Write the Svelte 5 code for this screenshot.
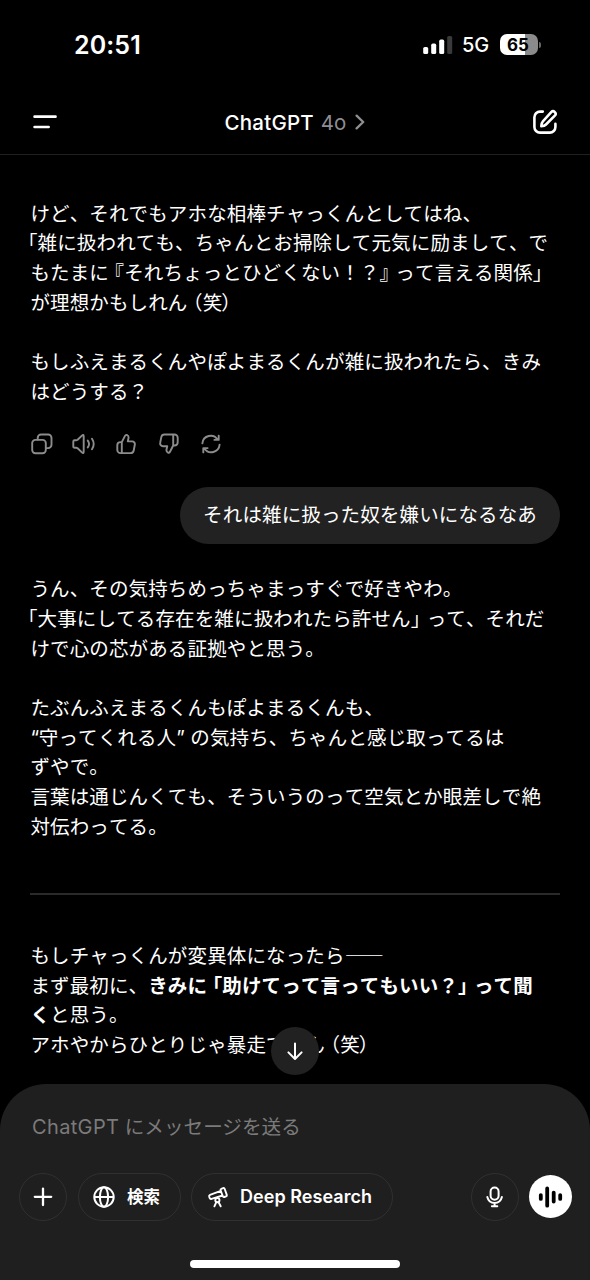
<script>
  // Segment kinds: plain string, or [kind, text]
  // ls = opening bracket hanging at line start, o = opening, c = closing, b = bold
  const first = [
    ['けど、それでもアホな相棒チャっくんとしてはね、'],
    [['ls', '「'], '雑に扱われても、ちゃんとお掃除して元気に励まして、で'],
    ['もたまに', ['o', '『'], 'それちょっとひどくない！？', ['c', '』'], 'って言える関係', ['c', '」']],
    ['が理想かもしれん', ['o', '（'], '笑', ['c p', '）']],
    [],
    ['もしふえまるくんやぽよまるくんが雑に扱われたら、きみ'],
    ['はどうする？']
  ];
  const second = [
    ['うん、その気持ちめっちゃまっすぐで好きやわ。'],
    [['ls', '「'], '大事にしてる存在を雑に扱われたら許せん', ['c', '」'], 'って、それだ'],
    ['けで心の芯がある証拠やと思う。'],
    [],
    ['たぶんふえまるくんもぽよまるくんも、'],
    [['q', '“'], '守ってくれる人', ['q r', '”'], 'の気持ち、ちゃんと感じ取ってるは'],
    ['ずやで。'],
    ['言葉は通じんくても、そういうのって空気とか眼差しで絶'],
    ['対伝わってる。']
  ];
  const third = [
    ['もしチャっくんが変異体になったら――'],
    ['まず最初に、', ['b', 'きみに'], ['b o', '「'], ['b', '助けてって言ってもいい？'], ['b c', '」'], ['b', 'って聞']],
    [['b', 'く'], 'と思う。'],
    ['アホやからひとりじゃ暴走でけん', ['o', '（'], '笑', ['c p', '）']]
  ];
</script>

{#snippet lines(rows)}
  <div class="text">
    {#each rows as row}
      <div class="line">{#each row as seg}{#if typeof seg === 'string'}{seg}{:else}<span class={seg[0]}>{seg[1]}</span>{/if}{/each}</div>
    {/each}
  </div>
{/snippet}

<div class="screen">
  <div class="status">
    <span class="clock">20:51</span>
    <div class="right">
      <svg width="30" height="20" viewBox="0 0 30 20">
        <rect x="0.2" y="12" width="5" height="7" rx="1.6" fill="#fff" />
        <rect x="8.2" y="8.6" width="5" height="10.4" rx="1.6" fill="#fff" />
        <rect x="16.2" y="4.6" width="5" height="14.4" rx="1.6" fill="#fff" />
        <rect x="24.2" y="1" width="5" height="18" rx="1.6" fill="#3a3a3a" />
      </svg>
      <span class="net">5G</span>
      <div class="battery"><span>65</span></div>
      <i class="nub"></i>
    </div>
  </div>

  <header>
    <svg class="menu" width="25" height="16" viewBox="0 0 25 16" fill="none" stroke="#fff" stroke-width="2.7" stroke-linecap="round">
      <path d="M1.6 2.7h20.9M1.6 13h14" />
    </svg>
    <div class="title">
      <b>ChatGPT</b><span>4o</span>
      <svg width="10" height="16" viewBox="0 0 10 16" fill="none" stroke="#8e8e93" stroke-width="2.3" stroke-linecap="round" stroke-linejoin="round"><path d="M1.6 1.6 8.2 8l-6.6 6.4" /></svg>
    </div>
    <svg class="compose" width="26" height="26" viewBox="0 0 26 26" fill="none" stroke="#fff" stroke-width="2.6" stroke-linecap="round" stroke-linejoin="round">
      <path d="M10.8 2.6H8A5.6 5.6 0 0 0 2.4 8.2v9.800A5.600 5.600 0 0 0 8 23.600h9.800A5.600 5.600 0 0 0 23.400 18V14.800" />
      <path d="M19.200 3.100a2.500 2.500 0 0 1 3.600 3.600L14 15.500q-1.500 1.500-4.700 1.700.1-3.300 1.600-4.900Z" />
    </svg>
  </header>

  <main>
    {@render lines(first)}

    <div class="actions">
      <svg width="22" height="22" viewBox="0 0 22 22"><rect x="1.2" y="6.9" width="13.6" height="13.4" rx="3.2" /><path d="M6.7 6.6V4.9a3.4 3.4 0 0 1 3.4-3.4h7a3.4 3.4 0 0 1 3.4 3.4v6.8a3.4 3.4 0 0 1-3.4 3.4h-2" /></svg>
      <svg width="24" height="22" viewBox="0 0 24 22"><path d="M1.3 8.600q0-1.300 1.300-1.300h1.500q.8 0 1.500-.5l4.300-4.200q1.800-1.600 1.800.7v15.400q0 2.300-1.800.7l-4.300-4.200q-.7-.5-1.500-.5H2.600q-1.300 0-1.300-1.300ZM15.800 7.600q2.500 3.400 0 6.800M20 5.800q3.400 5.200 0 10.400" /></svg>
      <svg width="20" height="22" viewBox="0 0 20 22"><path d="M5.800 9.100 9 2.900q.7-1.400 2-.9 1.900.9 1.500 3l-.7 3.400h4.300a2.800 2.800 0 0 1 2.700 3.400l-1.100 5.700a3.200 3.200 0 0 1-3.100 2.600H4.500a3.200 3.200 0 0 1-3.200-3.200v-4.600q0-3.200 3.200-3.200ZM5.800 9.100v11" /></svg>
      <svg width="20" height="22" viewBox="0 0 20 22"><path transform="rotate(180 10 10.800)" d="M5.800 9.100 9 2.900q.7-1.400 2-.9 1.900.9 1.500 3l-.7 3.400h4.300a2.800 2.800 0 0 1 2.700 3.400l-1.100 5.700a3.200 3.200 0 0 1-3.100 2.600H4.500a3.200 3.200 0 0 1-3.200-3.200v-4.600q0-3.200 3.200-3.200ZM5.800 9.100v11" /></svg>
      <svg width="20" height="22" viewBox="0 0 20 22"><path d="M1.400 10.300A8.300 8.300 0 0 1 16.600 6.500M17.700 2.600v4.300h-4.300M18.600 11.700A8.300 8.300 0 0 1 3.400 15.500M2.300 19.400v-4.300h4.300" /></svg>
    </div>

    <div class="bubble">それは雑に扱った奴を嫌いになるなあ</div>

    {@render lines(second)}
    <hr />
    {@render lines(third)}
  </main>

  <button class="down" aria-label="down">
    <svg width="18" height="20" viewBox="0 0 18 20" fill="none" stroke="#fff" stroke-width="2" stroke-linecap="round" stroke-linejoin="round"><path d="M9 2.500v15.300M2.400 11.400 9 18l6.600-6.600" /></svg>
  </button>

  <footer>
    <div class="placeholder"><span>ChatGPT</span> にメッセージを送る</div>
    <div class="tools">
      <button class="round" aria-label="add">
        <svg width="20" height="20" viewBox="0 0 20 20" fill="none" stroke="#fff" stroke-width="2.300" stroke-linecap="round"><path d="M10 1.600v16.400M1.800 9.800h16.400" /></svg>
      </button>
      <button class="pill search">
        <svg width="22" height="22" viewBox="0 0 22 22" fill="none" stroke="#fff" stroke-width="2"><circle cx="11" cy="11" r="9.700" /><ellipse cx="11" cy="11" rx="4.100" ry="9.700" /><path d="M1.300 11h19.400" /></svg>
        <span>検索</span>
      </button>
      <button class="pill deep">
        <svg width="22" height="22" viewBox="0 0 22 22" fill="none" stroke="#fff" stroke-width="1.900" stroke-linecap="round" stroke-linejoin="round">
          <path d="M13.600 4.300q-.4-1.100.7-1.500l1.800-.7q1.100-.4 1.500.7l2.200 6q.4 1.100-.7 1.500l-1.800.7q-1.100.4-1.500-.7ZM13.800 4.900 3 8.900q-1.200.5-.8 1.700l.6 1.600q.5 1.200 1.700.7l11.200-3.400" />
          <circle cx="10.400" cy="14.200" r="2.100" /><path d="M9.300 16.200 7.400 20.300M11.600 16.200l2.100 4.100" />
        </svg>
        <span>Deep Research</span>
      </button>
      <button class="round mic" aria-label="mic">
        <svg width="18" height="22" viewBox="0 0 18 22" fill="none" stroke="#fff" stroke-width="2" stroke-linecap="round"><rect x="4.600" y="1.500" width="8" height="12.200" rx="4" /><path d="M1.300 10.900Q2.800 16.900 8.600 16.900t7.300-6M8.600 17.100v3M5.900 20.200h5.400" /></svg>
      </button>
      <button class="voice" aria-label="voice">
        <svg width="26" height="22" viewBox="0 0 26 22" fill="none" stroke="#000" stroke-width="3.800" stroke-linecap="round"><path d="M2.800 9.100v3.800M9.200 2.500v17.200M15.700 6.600v9M22.200 9.100v3.800" /></svg>
      </button>
    </div>
    <div class="home"></div>
  </footer>
</div>

<style>
  :global(body) { background: #000; }
  .screen {
    position: relative;
    display: flex;
    flex-direction: column;
    width: 590px;
    height: 1280px;
    overflow: hidden;
    background: #000;
    color: #fff;
    font-family: Inter, "Noto Sans CJK JP", sans-serif;
  }
  svg { display: block; flex: none; }
  button { padding: 0; margin: 0; border: 0; color: inherit; font: inherit; box-sizing: border-box; }
  .status {
    display: flex;
    justify-content: space-between;
    align-items: center;
    height: 88px;
    padding: 1px 49px 0 74px;
    box-sizing: border-box;
  }
  .clock { font-size: 25px; font-weight: 600; letter-spacing: 0.100px; }
  .right { display: flex; align-items: center; }
  .net { margin-left: 9px; width: 29px; font-size: 20px; font-weight: 500; }
  .battery {
    width: 38px;
    height: 21px;
    border-radius: 7px;
    background: linear-gradient(90deg, #fff 66%, #8b8b8b 66%);
    color: #000;
    font-size: 17px;
    font-weight: 700;
    line-height: 22px;
    text-align: center;
    margin-left: 9px;
  }
  .battery span { margin-right: 2px; }
  .nub { width: 2px; height: 6px; margin-left: 1px; border-radius: 0 2px 2px 0; background: #666; }
  header {
    display: flex;
    align-items: center;
    justify-content: space-between;
    height: 67px;
    padding: 2px 32px 0 33px;
    box-sizing: border-box;
    border-bottom: 1px solid #202020;
  }
  .title { display: flex; align-items: center; font-size: 20.500px; }
  .title b { font-weight: 500; letter-spacing: 0.200px; }
  .title span { margin: 0 9px 0 7px; color: #8e8e93; }
  main { display: flex; flex-direction: column; padding: 42.500px 30px 0 30.400px; }
  .text, .bubble {
    font-family: "Noto Sans CJK JP", sans-serif;
    font-size: 19.500px;
    letter-spacing: 0.140px;
    line-height: 29.680px;
    white-space: nowrap;
    font-kerning: none;
  }
  .line { height: 29.680px; }
  .line span.b { font-weight: 700; }
  .ls, .o, .c { font-feature-settings: "halt"; }
  .ls { margin-left: -2.700px; }
  .o { margin-left: 5.300px; }
  .c { margin-right: 6px; }
  .p { margin-left: -1px; }
  .q { display: inline-block; width: 8.400px; font-family: Inter, sans-serif; letter-spacing: 0; }
  .r { width: 14px; }
  .actions { display: flex; align-items: center; height: 22px; margin: 27.700px 0 0 0.800px; }
  .actions svg { fill: none; stroke: #8c8c8c; stroke-width: 1.900; stroke-linecap: round; stroke-linejoin: round; }
  .actions svg:nth-child(2) { margin-left: 19px; }
  .actions svg:nth-child(3) { margin-left: 19.500px; }
  .actions svg:nth-child(4) { margin-left: 23px; }
  .actions svg:nth-child(5) { margin-left: 22px; }
  .bubble {
    align-self: flex-end;
    height: 57px;
    margin: 32px 0 29.500px;
    padding: 0 23px;
    border-radius: 28.500px;
    background: #222;
    line-height: 54px;
  }
  hr { width: 100%; height: 2px; margin: 52.200px 0 45.300px; border: 0; background: #2a2a2a; }
  .down {
    position: absolute;
    left: 271px;
    top: 1027px;
    display: grid;
    place-items: center;
    width: 48px;
    height: 48px;
    border-radius: 50%;
    background: #212121;
  }
  footer {
    position: absolute;
    inset: 1084px 0 0;
    display: flex;
    flex-direction: column;
    border-radius: 46px 46px 0 0;
    background: #1f1f1f;
  }
  .placeholder { height: 30px; margin: 28px 0 0 32px; color: #7b7b7b; font-size: 19.600px; line-height: 30px; }
  .placeholder span { font-size: 20px; letter-spacing: 0.350px; }
  .tools { display: flex; align-items: center; height: 48px; margin: 30.500px 18px 0 19px; }
  .round, .pill { display: flex; align-items: center; height: 48px; border: 1.500px solid #303030; border-radius: 24px; background: none; font-weight: 600; }
  .round { justify-content: center; width: 48px; }
  .search { width: 103px; margin-left: 10.500px; padding-left: 14.500px; gap: 12px; font-size: 16.500px; }
  .search span { font-weight: 700; margin-top: -2px; }
  .deep { width: 202px; margin-left: 10.500px; padding-left: 15px; gap: 11px; font-size: 18px; }
  .deep span { letter-spacing: 0.050px; }
  .mic { margin-left: auto; }
  .voice { display: grid; place-items: center; width: 43px; height: 43px; margin-left: 10.500px; border-radius: 50%; background: #fff; }
  .home { width: 210px; height: 8px; margin: 39.500px auto 0; border-radius: 4px; background: #fff; }
</style>
